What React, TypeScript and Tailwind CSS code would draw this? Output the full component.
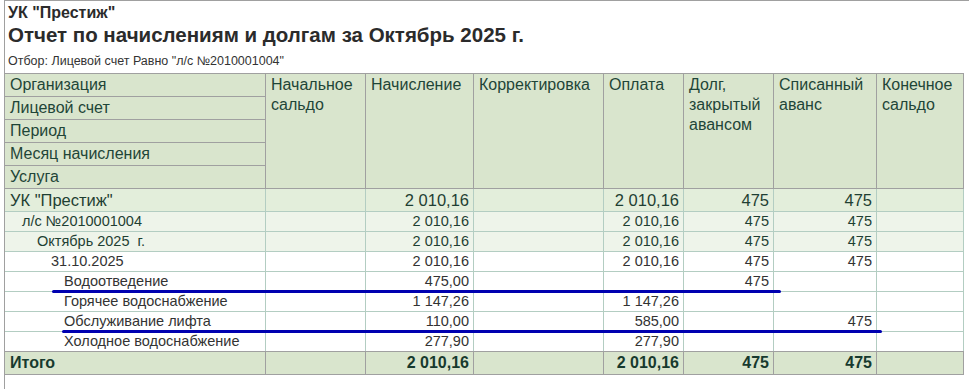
import React from "react";

const W = ["w-[261px]", "w-[100px]", "w-[108px]", "w-[130px]", "w-[80px]", "w-[90px]", "w-[103px]", "w-[87px]"];

type Row = {
  name: string;
  indent: string;
  vals: string[];
  kind: "top" | "group" | "detail";
  bottomGray?: boolean;
};

const rows: Row[] = [
  { name: 'УК "Престиж"', indent: "pl-[5px]", vals: ["", "2 010,16", "", "2 010,16", "475", "475", ""], kind: "top" },
  { name: "л/с №2010001004", indent: "pl-[17px]", vals: ["", "2 010,16", "", "2 010,16", "475", "475", ""], kind: "group" },
  { name: "Октябрь 2025  г.", indent: "pl-[32px]", vals: ["", "2 010,16", "", "2 010,16", "475", "475", ""], kind: "group" },
  { name: "31.10.2025", indent: "pl-[46px]", vals: ["", "2 010,16", "", "2 010,16", "475", "475", ""], kind: "detail" },
  { name: "Водоотведение", indent: "pl-[59px]", vals: ["", "475,00", "", "", "475", "", ""], kind: "detail" },
  { name: "Горячее водоснабжение", indent: "pl-[59px]", vals: ["", "1 147,26", "", "1 147,26", "", "", ""], kind: "detail" },
  { name: "Обслуживание лифта", indent: "pl-[59px]", vals: ["", "110,00", "", "585,00", "", "475", ""], kind: "detail" },
  { name: "Холодное водоснабжение", indent: "pl-[59px]", vals: ["", "277,90", "", "277,90", "", "", ""], kind: "detail", bottomGray: true },
];

function DataRow({ r }: { r: Row }) {
  const bg = r.kind === "top" ? "bg-[#e3eedb]" : r.kind === "group" ? "bg-[#eef4ea]" : "bg-white";
  const h = r.kind === "top" ? "h-[23px]" : "h-[20px]";
  const size = r.kind === "top" ? "text-[16.5px] leading-[22px]" : "text-[14.5px] leading-[19px]";
  const color = r.kind === "detail" ? "text-[#333333]" : "text-[#1f3f33]";
  const bb = r.bottomGray ? "border-b-[#a0a0a0]" : "border-b-[#b3cdc2]";
  return (
    <div className={`flex ${h} ${bg} ${size} ${color} border-b ${bb}`}>
      <div className={`${W[0]} shrink-0 border-r border-r-[#b3cdc2] ${r.indent} whitespace-pre overflow-hidden`}>{r.name}</div>
      {r.vals.map((v, i) => (
        <div key={i} className={`${W[i + 1]} shrink-0 border-r border-r-[#b3cdc2] pr-[4px] text-right whitespace-nowrap`}>
          {v}
        </div>
      ))}
    </div>
  );
}

export default function App() {
  const leftHeads = ["Организация", "Лицевой счет", "Период", "Месяц начисления", "Услуга"];
  const heads = [
    ["Начальное", "сальдо"],
    ["Начисление"],
    ["Корректировка"],
    ["Оплата"],
    ["Долг,", "закрытый", "авансом"],
    ["Списанный", "аванс"],
    ["Конечное", "сальдо"],
  ];
  const total = ["", "2 010,16", "", "2 010,16", "475", "475", ""];
  return (
    <div
      className="relative w-[969px] h-[389px] bg-white overflow-hidden pl-[4px]"
      style={{ fontFamily: '"Liberation Sans", Arial, sans-serif' }}
    >
      <div className="h-full border-l border-t border-[#a0a0a0]">
        <div className="h-[72px] pl-[3px] pt-[3px] text-[#2b2b2b]">
          <div className="text-[16px] leading-[18px] font-bold">УК "Престиж"</div>
          <div className="mt-[1px] text-[20.5px] leading-[24px] font-bold">Отчет по начислениям и долгам за Октябрь 2025 г.</div>
          <div className="mt-[7px] text-[12.5px] leading-[14px] text-[#333]">Отбор: Лицевой счет Равно "л/с №2010001004"</div>
        </div>

        <div className="w-[959px]">
          {/* header */}
          <div className="flex border-t border-b border-[#a0a0a0] bg-[#d9e5cd] text-[16px] text-[#1f4538]">
            <div className={`${W[0]} shrink-0 border-r border-r-[#a0a0a0] flex flex-col`}>
              {leftHeads.map((t, i) => (
                <div
                  key={t}
                  className={`pl-[5px] leading-[22px] ${i < 4 ? "h-[23px] border-b border-b-[#a0a0a0]" : "h-[22px]"}`}
                >
                  {t}
                </div>
              ))}
            </div>
            {heads.map((lines, i) => (
              <div key={i} className={`${W[i + 1]} shrink-0 border-r border-r-[#a0a0a0] pl-[5px] pt-[1px] leading-[20px]`}>
                {lines.map((l) => (
                  <div key={l} className="whitespace-nowrap">{l}</div>
                ))}
              </div>
            ))}
          </div>

          {rows.map((r, i) => (
            <DataRow key={i} r={r} />
          ))}

          {/* total */}
          <div className="flex h-[23px] bg-[#d9e5cd] border-b border-[#a0a0a0] text-[16px] leading-[22px] font-bold text-[#173a2e]">
            <div className={`${W[0]} shrink-0 border-r border-r-[#a0a0a0] pl-[5px]`}>Итого</div>
            {total.map((v, i) => (
              <div key={i} className={`${W[i + 1]} shrink-0 border-r border-r-[#a0a0a0] pr-[4px] text-right whitespace-nowrap`}>
                {v}
              </div>
            ))}
          </div>
        </div>
      </div>

      {/* annotation underlines */}
      <div className="absolute left-[52px] top-[290px] w-[729px] h-[3px] rounded-full bg-[#0000b0]" />
      <div className="absolute left-[62px] top-[330px] w-[820px] h-[3px] rounded-full bg-[#0000b0]" />
    </div>
  );
}
